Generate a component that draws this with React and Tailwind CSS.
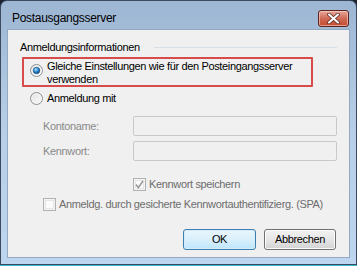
import React from 'react';

const font = { fontFamily: '"Liberation Sans", Arial, sans-serif' };

const Radio = ({ checked }) => (
  <svg width="13" height="13" viewBox="0 0 13 13" className="shrink-0">
    <defs>
      <linearGradient id={checked ? 'rbg1' : 'rbg0'} x1="0" y1="0" x2="1" y2="1">
        <stop offset="0" stopColor="#e0e0e0" />
        <stop offset="1" stopColor="#fdfdfd" />
      </linearGradient>
      <radialGradient id="rdot" cx="0.4" cy="0.35" r="0.7">
        <stop offset="0" stopColor="#b9e3f8" />
        <stop offset="0.5" stopColor="#2a8ad0" />
        <stop offset="1" stopColor="#0e3f78" />
      </radialGradient>
    </defs>
    <circle cx="6.5" cy="6.5" r="6" fill={`url(#${checked ? 'rbg1' : 'rbg0'})`} stroke="#8e8f8f" />
    <circle cx="6.5" cy="6.5" r="4.5" fill="none" stroke="#f4f4f4" strokeWidth="0.8" />
    {checked && <circle cx="6.5" cy="6.5" r="3.3" fill="url(#rdot)" stroke="#1d4f80" strokeWidth="0.6" />}
  </svg>
);

const Check = ({ checked }) => (
  <svg width="13" height="13" viewBox="0 0 13 13" className="shrink-0">
    <rect x="0.5" y="0.5" width="12" height="12" fill="#f4f4f4" stroke="#b1b1b1" />
    <rect x="2.5" y="2.5" width="8" height="8" fill="#fbfbfb" stroke="#e6e6e6" />
    {checked && (
      <path d="M3 6.6 L5.3 9.6 L10 3" fill="none" stroke="#9a9a9a" strokeWidth="1.6" />
    )}
  </svg>
);

export default function App() {
  return (
    <div className="w-[357px] h-[266px] bg-[#1b2430] text-[11px] leading-[15px] tracking-[-0.35px] text-black" style={font}>
      <div className="w-[357px] h-[265px] flex flex-col rounded-t-[7px] border border-[#3a4b60] bg-gradient-to-b from-[#9cb6d3] via-[#b8cfe7] to-[#bdd5ee] px-[6px] pb-[6px]">
        {/* Title bar */}
        <div className="h-[28px] pt-[7px] flex items-center justify-between pl-[5px] pr-[1px] shrink-0">
          <span className="text-[12px] tracking-[-0.3px]">Postausgangsserver</span>
          <button className="w-[31px] h-[17px] rounded-[3px] border border-[#5b2620] bg-gradient-to-b from-[#e7a99e] via-[#cf6a55] to-[#c34a2e] flex items-center justify-center shadow-[inset_0_0_0_1px_rgba(255,210,200,0.6)]">
            <svg width="13" height="11" viewBox="0 0 13 11">
              <path d="M2 1.5 L11 9.5 M11 1.5 L2 9.5" stroke="#5b2a24" strokeWidth="3.6" strokeLinecap="round" />
              <path d="M2 1.5 L11 9.5 M11 1.5 L2 9.5" stroke="#ffffff" strokeWidth="2" strokeLinecap="round" />
            </svg>
          </button>
        </div>

        {/* Client area */}
        <div className="flex-1 border border-[#93a9c2] bg-[#f0f0f0] flex flex-col pl-[12px] pr-[12px] pt-[10px]">
          <div className="flex items-center h-[15px]">
            <span>Anmeldungsinformationen</span>
            <div className="flex-1 h-px bg-[#d5dfe5] ml-[14px]" />
          </div>

          <div className="mt-[2px] ml-[2px] w-[291px] h-[30px] border-2 border-[#d74b4b] rounded-[1px] flex pl-[6px] pt-[1px] leading-[13px]">
            <div className="mt-[4px]"><Radio checked /></div>
            <span className="ml-[4px]">Gleiche Einstellungen wie für den Posteingangsserver<br />verwenden</span>
          </div>

          <div className="mt-[4px] ml-[10px] flex items-center h-[15px] gap-[4px]">
            <Radio />
            <span>Anmeldung mit</span>
          </div>

          <div className="mt-[10px] ml-[23px] flex items-center h-[20px]">
            <span className="w-[90px] text-[#8a8a8a]">Kontoname:</span>
            <div className="w-[205px] h-[20px] border border-[#c9c9c9] rounded-[2px] bg-[#f0f0f0]" />
          </div>
          <div className="mt-[5px] ml-[23px] flex items-center h-[20px]">
            <span className="w-[90px] text-[#8a8a8a]">Kennwort:</span>
            <div className="w-[205px] h-[20px] border border-[#c9c9c9] rounded-[2px] bg-[#f0f0f0]" />
          </div>

          <div className="mt-[16px] ml-[113px] flex items-center h-[15px] gap-[3px]">
            <Check checked />
            <span className="text-[#6d6d6d]">Kennwort speichern</span>
          </div>

          <div className="mt-[5px] ml-[23px] flex items-center h-[15px] gap-[3px]">
            <Check />
            <span className="text-[#6d6d6d]">Anmeldg. durch gesicherte Kennwortauthentifizierg. (SPA)</span>
          </div>

          <div className="mt-[17px] flex justify-end gap-[8px] pr-[1px]">
            <button className="w-[73px] h-[21px] rounded-[3px] border border-[#3c7fb1] bg-gradient-to-b from-[#eaf6fd] via-[#d9f0fc] to-[#bee6fd] shadow-[inset_0_0_0_1px_#d4ecfa]">OK</button>
            <button className="w-[72px] h-[21px] rounded-[3px] border border-[#707070] bg-gradient-to-b from-[#f2f2f2] via-[#e6e6e6] to-[#d3d3d3] shadow-[inset_0_0_0_1px_#fbfbfb]">Abbrechen</button>
          </div>
        </div>
      </div>
      <div className="h-px bg-[#3bb8d0]" />
    </div>
  );
}
